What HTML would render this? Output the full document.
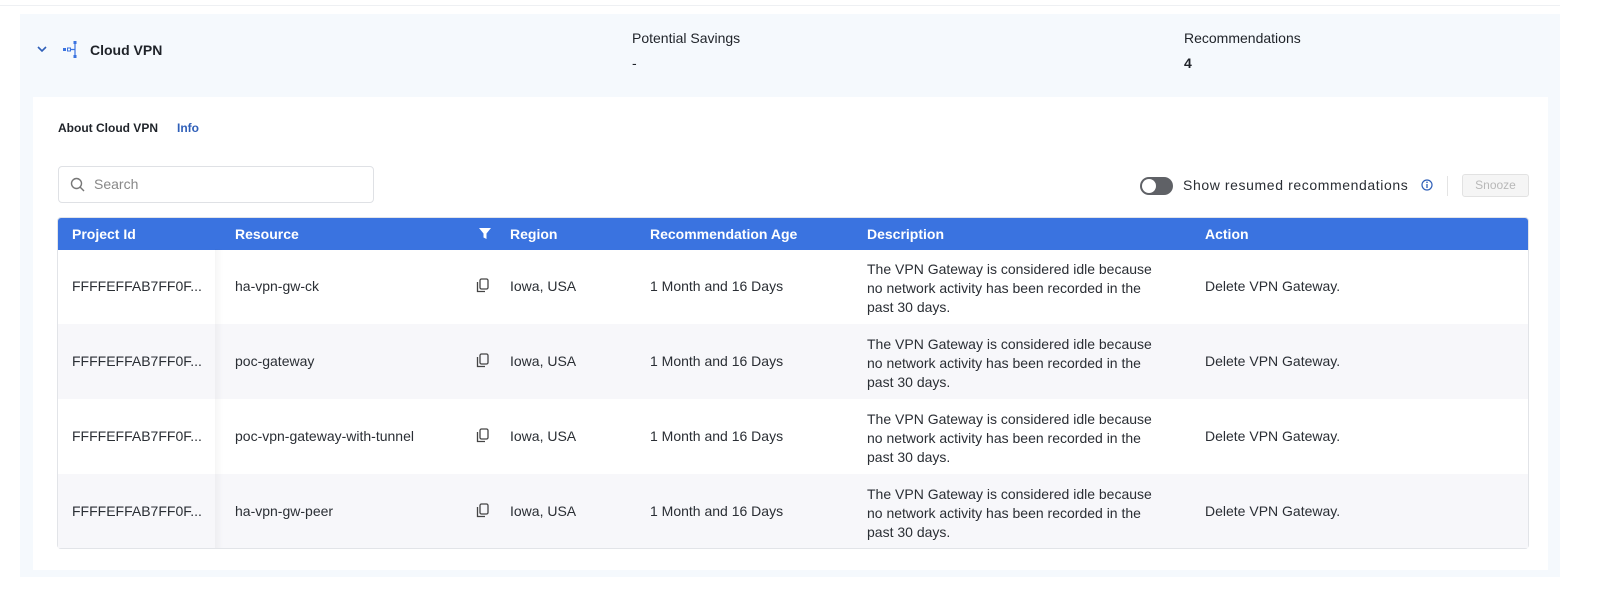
<!DOCTYPE html>
<html><head><style>
*{margin:0;padding:0;box-sizing:border-box}
body{width:1600px;height:589px;background:#fff;font-family:"Liberation Sans",sans-serif;color:#1f2329;position:relative;overflow:hidden}
.abs{position:absolute}
.outer{left:20px;top:14px;width:1540px;height:563px;background:#f5f9fd}
.inner{left:33px;top:97px;width:1515px;height:473px;background:#fff}
.t13{font-size:14px}
.tbl{left:57px;top:217px;width:1472px;height:332px;border:1px solid #e2e4e8;border-radius:4px;overflow:hidden;background:#fff}
.hdr{position:absolute;left:0;top:0;width:100%;height:32px;background:#3a73e0;color:#fff;font-weight:bold;font-size:14px}
.hdr span{position:absolute;top:8px}
.row{position:absolute;left:0;width:100%;height:75px;font-size:14px;color:#2a2e34}
.row span{position:absolute}
.alt{background:#f7f7fa}
.c1{left:14px;top:29px}.c2{left:177px;top:29px}.c4{left:452px;top:29px}.c5{left:592px;top:29px}.c6{left:809px;top:11px;line-height:19px;width:292px}.c7{left:1147px;top:29px}
.cp{left:418px;top:29px}
</style></head><body>
<div class="abs" style="left:0;top:5px;width:1560px;height:1px;background:#eef0f3"></div>
<div class="abs outer"></div>
<svg class="abs" style="left:36px;top:44px" width="12" height="10"><path d="M2 3 L6 7 L10 3" stroke="#2f5fb8" stroke-width="1.6" fill="none"/></svg>
<svg class="abs" style="left:63px;top:41px" width="16" height="18"><rect x="0" y="7" width="3" height="3" fill="#3a73e0"/><rect x="4.5" y="7" width="3" height="3" fill="none" stroke="#3a73e0" stroke-width="1"/><path d="M8 8.5 H12 M12 2 V15" stroke="#3a73e0" stroke-width="1.2"/><rect x="10.5" y="0" width="3" height="3" fill="#3a73e0"/><rect x="10.5" y="14" width="3" height="3" fill="#3a73e0"/></svg>
<div class="abs" style="left:90px;top:42px;font-size:14px;font-weight:bold">Cloud VPN</div>
<div class="abs t13" style="left:632px;top:30px">Potential Savings</div>
<div class="abs t13" style="left:632px;top:55px">-</div>
<div class="abs t13" style="left:1184px;top:30px">Recommendations</div>
<div class="abs t13" style="left:1184px;top:55px;font-weight:bold">4</div>
<div class="abs inner"></div>
<div class="abs" style="left:58px;top:121px;font-size:12px;font-weight:bold">About Cloud VPN</div>
<div class="abs" style="left:177px;top:121px;font-size:12px;font-weight:bold;color:#2f5fb8">Info</div>
<div class="abs" style="left:58px;top:166px;width:316px;height:37px;border:1px solid #dfe1e5;border-radius:4px"></div>
<svg class="abs" style="left:70px;top:177px" width="16" height="16"><circle cx="6.5" cy="6.5" r="5" stroke="#777" stroke-width="1.4" fill="none"/><path d="M10 10 L14 14" stroke="#777" stroke-width="1.4"/></svg>
<div class="abs t13" style="left:94px;top:176px;color:#888">Search</div>
<div class="abs" style="left:1140px;top:177px;width:33px;height:18px;border-radius:9px;background:#5f6166"></div>
<div class="abs" style="left:1142px;top:179px;width:14px;height:14px;border-radius:7px;background:#fff"></div>
<div class="abs t13" style="left:1183px;top:177px;width:229px;color:#2a2e34;letter-spacing:0.6px;white-space:nowrap">Show resumed recommendations</div>
<svg class="abs" style="left:1421px;top:179px" width="12" height="12"><circle cx="6" cy="6" r="5" stroke="#2f5fb8" stroke-width="1.2" fill="none"/><path d="M6 5 V9" stroke="#2f5fb8" stroke-width="1.3"/><circle cx="6" cy="3.3" r=".8" fill="#2f5fb8"/></svg>
<div class="abs" style="left:1447px;top:176px;width:1px;height:20px;background:#e4e4e4"></div>
<div class="abs" style="left:1462px;top:174px;width:67px;height:23px;border:1px solid #e2e2e2;border-radius:3px;background:#f5f5f5;color:#b8b8b8;font-size:12px;text-align:center;line-height:21px">Snooze</div>
<div class="abs tbl">
<div class="hdr"><span style="left:14px">Project Id</span><span style="left:177px">Resource</span><svg style="position:absolute;left:421px;top:10px" width="12" height="12"><path d="M0 0 H12 L7.5 5.5 V11 L4.5 9.5 V5.5 Z" fill="#fff"/></svg><span style="left:452px">Region</span><span style="left:592px">Recommendation Age</span><span style="left:809px">Description</span><span style="left:1147px">Action</span></div>
</div>
<div class="abs" style="left:58px;top:249px;width:1470px;height:299px">
<div class="row" style="top:0"><span class="c1">FFFFEFFAB7FF0F...</span><span class="c2">ha-vpn-gw-ck</span><span class="cp"><svg width="14" height="15"><rect x="4" y="1" width="8" height="10" rx="1.5" stroke="#444" stroke-width="1.3" fill="none"/><path d="M1.5 4 V13.5 H9" stroke="#444" stroke-width="1.3" fill="none"/></svg></span><span class="c4">Iowa, USA</span><span class="c5">1 Month and 16 Days</span><span class="c6">The VPN Gateway is considered idle because no network activity has been recorded in the past 30 days.</span><span class="c7">Delete VPN Gateway.</span></div>
<div class="row alt" style="top:75px"><span class="c1">FFFFEFFAB7FF0F...</span><span class="c2">poc-gateway</span><span class="cp"><svg width="14" height="15"><rect x="4" y="1" width="8" height="10" rx="1.5" stroke="#444" stroke-width="1.3" fill="none"/><path d="M1.5 4 V13.5 H9" stroke="#444" stroke-width="1.3" fill="none"/></svg></span><span class="c4">Iowa, USA</span><span class="c5">1 Month and 16 Days</span><span class="c6">The VPN Gateway is considered idle because no network activity has been recorded in the past 30 days.</span><span class="c7">Delete VPN Gateway.</span></div>
<div class="row" style="top:150px"><span class="c1">FFFFEFFAB7FF0F...</span><span class="c2">poc-vpn-gateway-with-tunnel</span><span class="cp"><svg width="14" height="15"><rect x="4" y="1" width="8" height="10" rx="1.5" stroke="#444" stroke-width="1.3" fill="none"/><path d="M1.5 4 V13.5 H9" stroke="#444" stroke-width="1.3" fill="none"/></svg></span><span class="c4">Iowa, USA</span><span class="c5">1 Month and 16 Days</span><span class="c6">The VPN Gateway is considered idle because no network activity has been recorded in the past 30 days.</span><span class="c7">Delete VPN Gateway.</span></div>
<div class="row alt" style="top:225px;height:74px"><span class="c1">FFFFEFFAB7FF0F...</span><span class="c2">ha-vpn-gw-peer</span><span class="cp"><svg width="14" height="15"><rect x="4" y="1" width="8" height="10" rx="1.5" stroke="#444" stroke-width="1.3" fill="none"/><path d="M1.5 4 V13.5 H9" stroke="#444" stroke-width="1.3" fill="none"/></svg></span><span class="c4">Iowa, USA</span><span class="c5">1 Month and 16 Days</span><span class="c6">The VPN Gateway is considered idle because no network activity has been recorded in the past 30 days.</span><span class="c7">Delete VPN Gateway.</span></div>
<div style="position:absolute;left:157px;top:0;width:8px;height:299px;background:linear-gradient(90deg,rgba(0,0,0,.035),rgba(0,0,0,0))"></div>
</div>
</body></html>
